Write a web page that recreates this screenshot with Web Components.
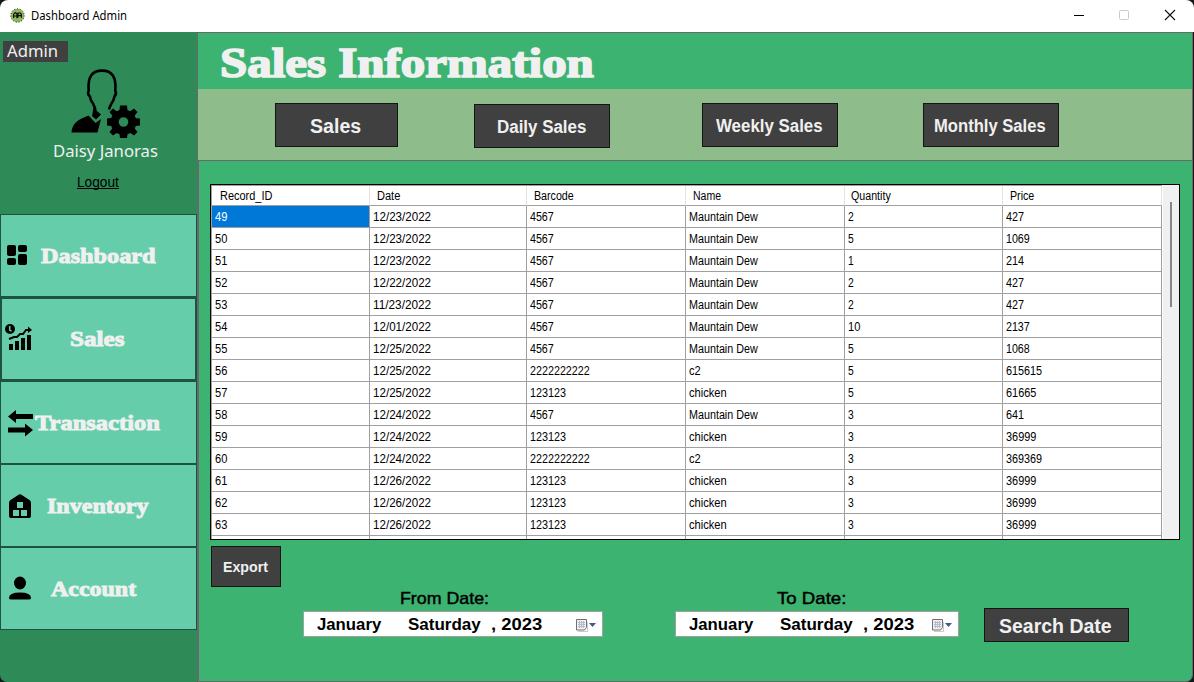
<!DOCTYPE html>
<html lang="en">
<head>
<meta charset="utf-8">
<title>Dashboard Admin</title>
<style>
html,body{margin:0;height:100%;overflow:hidden;background:#15171c}
body{font-family:"Liberation Sans",Arial,sans-serif;font-size:12px;color:#000}
</style>
</head>
<body>
<sales-window></sales-window>
<script>
class Base extends HTMLElement{
  render(html){
    if(!this.shadowRoot)this.attachShadow({mode:'open'});
    this.shadowRoot.innerHTML=html;
  }
}

/* Text that is stretched horizontally to a given width. */
customElements.define('fit-text',class extends Base{
  connectedCallback(){
    const w=+this.getAttribute('w');
    this.render(`<style>:host{display:inline-block;flex:none;width:${w}px;white-space:pre}
      span{display:inline-block;transform-origin:0 50%}</style><span><slot></slot></span>`);
    const s=this.shadowRoot.querySelector('span');
    requestAnimationFrame(()=>{s.style.transform=`scaleX(${w/s.offsetWidth})`});
    if(s.offsetWidth)s.style.transform=`scaleX(${w/s.offsetWidth})`;
  }
});

customElements.define('title-bar',class extends Base{
  connectedCallback(){
    this.render(`<style>
    :host{display:flex;align-items:center;height:32px;background:#fff;border-radius:8px 8px 0 0;padding-left:10px;box-sizing:border-box;font:12px/16px "Noto Sans","Open Sans",sans-serif}
    .logo{margin:-2px 6px 0 0}
    .ctl{display:flex;margin-left:auto;margin-top:-2px}
    .ctl svg{display:block;margin-right:16px}
    .ctl svg:last-child{margin-right:9px}
    </style>
    <svg class="logo" width="15" height="15" viewBox="0 0 15 15"><circle cx="7.5" cy="7.5" r="6.700" fill="#8fb95d" stroke="#20301a" stroke-width="1" stroke-dasharray="1.100 1.700"/><circle cx="7.500" cy="7.500" r="5.500" fill="#8fb95d"/><path d="M3.600 10V6.200L5.400 4.600l1.500 1.200v4.400M3.800 8h3M8 9.800V5h2.200l1.200 1.300v3.500M8.200 7.600h3" fill="none" stroke="#111" stroke-width="1.200"/></svg>
    <fit-text w="96"><slot></slot></fit-text>
    <div class="ctl">
      <svg width="30" height="30"><path d="M11 15.500h10" stroke="#000"/></svg>
      <svg width="30" height="30"><rect x="10.500" y="10.500" width="9" height="9" rx="1" fill="none" stroke="#ccc"/></svg>
      <svg width="30" height="30"><path d="M10 10l10 10M20 10L10 20" stroke="#111" stroke-width="1.100"/></svg>
    </div>`);
  }
});

customElements.define('user-card',class extends Base{
  connectedCallback(){
    this.render(`<style>
    :host{display:flex;flex-direction:column;height:182px;box-sizing:border-box;padding-top:9px;font-family:"Noto Sans","Open Sans",sans-serif;color:#f0f0f0}
    .role{width:65px;height:21px;margin-left:3px;background:#404040;padding-left:4px;box-sizing:border-box;font-size:17px;line-height:20px}
    svg{display:block;margin:4px 0 0 68px}
    .name{margin-left:53px;font-size:17px;line-height:22px}
    .out{margin:12px 0 0 77px;width:42px;height:16px;font:14px/17px "Liberation Sans",Arial,sans-serif;color:#000;background:linear-gradient(#000,#000) 0 14px/42px 1px no-repeat}
    </style>
    <div class="role"><fit-text w="51">Admin</fit-text></div>
    <svg width="76" height="74" viewBox="0 0 76 74">
      <path d="M27.500 47C27.500 42 26.500 40 25 37.500C22.500 34.500 22.500 33 22 30.500C19.500 28.500 20 26 20.700 24.500C19.500 11 24 4.600 34 4.600C44 4.600 48.500 11 47.300 24.500C48.500 27 48 29 46.500 30.500C46 33 45.500 35 43.500 37.500C42.500 39.500 41.500 41 41 43.500" fill="none" stroke="#000" stroke-width="2.600"/>
      <path d="M25.500 42L33 48.500L28 53.500L24 50Z"/>
      <path d="M3.500 66.500C4 58 9 54 20.500 49.500L27.500 57L33 53L29.500 66.500Z"/>
      <path transform="translate(55.500 56)" fill-rule="evenodd" d="M-3.500-16.500H3.500L4-12L6.800-10.800L10.500-13.500L14-10L11.300-6.500L12.300-3.800L16.500-3.500V3.500L12.300 4L11.300 6.500L14 10L10.500 13.500L7 11L4 12.300L3.500 16H-3.500L-4 12.300L-7 11L-10.500 13.500L-14 10L-11.300 6.500L-12.300 4L-16.500 3.500V-3.500L-12.300-4L-11.300-6.500L-14-10L-10.500-13.500L-7-10.800L-4-12ZM0-4.800A4.800 4.800 0 1 0 0 4.800A4.800 4.800 0 1 0 0-4.800"/>
    </svg>
    <div class="name"><fit-text w="105"><slot></slot></fit-text></div>
    <div class="out"><fit-text w="42">Logout</fit-text></div>`);
  }
});

const ICONS={
  dashboard:`<rect x="1" y="2" width="9" height="11" rx="2"/><rect x="12" y="2" width="9" height="7" rx="2"/><rect x="1" y="15" width="9" height="7" rx="2"/><rect x="12" y="11" width="9" height="11" rx="2"/>`,
  sales:`<path d="M9 26h4v-6H9zM15 26h4v-9H15zM21 26h4v-12H21zM27 26h4v-15H27z"/><path d="M9 15L14 13H17L20 10H23L26 6H30" fill="none" stroke="#000" stroke-width="1.900"/><path d="M28 2.500L32 6L28 9Z"/><circle cx="10" cy="5" r="5"/><path d="M9.700 2V6L11.500 7.200" fill="none" stroke="#66cdaa" stroke-width="1.500"/>`,
  transaction:`<path d="M0 6.500L8 0V4H25V9H8V13ZM25 20L17 13.500V17.500H0V22.500H17V26.500Z"/>`,
  inventory:`<path fill-rule="evenodd" d="M1 22V8.500Q1 7 2.500 6L11 .6Q12 0 13 .6L21.500 6Q23 7 23 8.500V22Q23 24 21 24H3Q1 24 1 22ZM9 8V14H15V8ZM5 16V22H11V16ZM13 16V22H19V16Z"/>`,
  account:`<ellipse cx="12" cy="7" rx="6" ry="6.500"/><path d="M1 22Q1 16.500 12 16.500T23 22Q23 23.500 21 23.500H3Q1 23.500 1 22Z"/>`
};
customElements.define('nav-item',class extends Base{
  connectedCallback(){
    const a=n=>this.getAttribute(n), active=this.hasAttribute('active'),b=active?2:1;
    this.render(`<style>
    :host{display:flex;align-items:center;width:197px;height:${active?84:83}px;box-sizing:border-box;border:${b}px solid #1d5340;background:#66cdaa;color:#f0f0f0;font:bold 20px/26px "Liberation Serif",serif;-webkit-text-stroke:.9px #f0f0f0}
    svg{flex:none;margin-left:${a('ix')-b}px;margin-top:${a('iy')||0}px}
    fit-text{margin-left:${a('tx')}px}
    </style><svg width="${a('iw')}" height="27" viewBox="0 0 ${a('iw')} 27">${ICONS[a('icon')]}</svg><fit-text w="${a('w')}"><slot></slot></fit-text>`);
  }
});

customElements.define('flat-button',class extends Base{
  connectedCallback(){
    const a=n=>this.getAttribute(n);
    this.render(`<style>
    :host{display:flex;flex:none;align-items:center;justify-content:center;box-sizing:border-box;width:${a('bw')}px;height:${a('bh')}px;padding:1px 2px 0 0;border:1px solid #151515;background:#404040;color:#f0f0f0;font:bold ${a('fs')||17}px/20px "Liberation Sans",Arial,sans-serif}
    </style><fit-text w="${a('tw')}"><slot></slot></fit-text>`);
  }
});

customElements.define('date-field',class extends Base{
  connectedCallback(){
    const a=n=>this.getAttribute(n);
    this.render(`<style>
    :host{display:block;width:${a('bw')}px;font:17px/20px "Liberation Sans",Arial,sans-serif}
    .label{padding-left:${a('lx')}px;height:23px;line-height:22px;-webkit-text-stroke:.45px #000}
    .box{display:flex;align-items:center;box-sizing:border-box;height:26px;border:1px solid #a1a09c;border-radius:1px;background:#fff;padding:1px 5px 0 13px;font-weight:bold}
    .d{margin-left:27px}.y{margin-left:10px}
    svg{margin-left:auto}
    </style>
    <div class="label"><fit-text w="${a('lw')}"><slot></slot></fit-text></div>
    <div class="box"><fit-text w="64">January</fit-text><fit-text class="d" w="73">Saturday</fit-text><fit-text class="y" w="51">, 2023</fit-text>
    <svg width="22" height="14"><path d="M3 13.500h9.500V4" stroke="#ccc" fill="none"/><path d="M1.500 1.500h10v8l-2 2.500h-8z" fill="#eef0f4" stroke="#756d70"/><path d="M3 4.500h7M3 6.500h7M3 8.500h7M4.500 3v7M6.500 3v7M8.500 3v7" stroke="#b5bccb"/><path d="M14 5h7l-3.500 4z" fill="#41598c"/></svg></div>`);
  }
});

customElements.define('record-grid',class extends Base{
  connectedCallback(){
    const heads=[['Record_ID',52,8],['Date',23,7],['Barcode',40,7],['Name',28,7],['Quantity',40,6],['Price',24,7]];
    const M='Mauntain Dew',C='chicken',W={[M]:69,[C]:38,c2:12};
    const rows=[
      [49,'12/23/2022','4567',M,2,427],[50,'12/23/2022','4567',M,5,1069],[51,'12/23/2022','4567',M,1,214],
      [52,'12/22/2022','4567',M,2,427],[53,'11/23/2022','4567',M,2,427],[54,'12/01/2022','4567',M,10,2137],
      [55,'12/25/2022','4567',M,5,1068],[56,'12/25/2022','2222222222','c2',5,615615],[57,'12/25/2022','123123',C,5,61665],
      [58,'12/24/2022','4567',M,3,641],[59,'12/24/2022','123123',C,3,36999],[60,'12/24/2022','2222222222','c2',3,369369],
      [61,'12/26/2022','123123',C,3,36999],[62,'12/26/2022','123123',C,3,36999],[63,'12/26/2022','123123',C,3,36999]];
    const fit=v=>{v=String(v);const w=W[v]||(v.includes('/')?58:v.length*6);return `<fit-text w="${w}">${v}</fit-text>`};
    this.render(`<style>
    :host{display:flex;box-sizing:border-box;width:970px;height:356px;border:1px solid #000;background:#fff;overflow:hidden;font:12px/23px "Liberation Sans",Arial,sans-serif}
    .grid{width:951px;flex:none;box-sizing:border-box;border-top:1px solid #a0a0a0;border-left:1px solid #a0a0a0}
    .row{display:grid;grid-template-columns:158px 157px 159px 159px 158px 159px;height:22px}
    .row>div{box-sizing:border-box;padding-left:3px;border-right:1px solid #a0a0a0;border-bottom:1px solid #a0a0a0;overflow:hidden;height:22px}
    .head,.head>div{height:20px!important}
    .head>div{border-right-color:#e3e3e3;line-height:20px}
    .sel{background:#0078d7;color:#fff}
    .bar{flex:none;width:16px;margin-left:1px;background:#f0f0f0;box-sizing:border-box;padding:17px 0 0 7px}
    .bar i{display:block;width:2px;height:105px;background:#868686}
    </style>
    <div class="grid"><div class="row head">${heads.map(h=>`<div style="padding-left:${h[2]}px"><fit-text w="${h[1]}">${h[0]}</fit-text></div>`).join('')}</div>
    ${rows.map((r,i)=>`<div class="row">${r.map((v,j)=>`<div${i+j?'':' class="sel"'}>${fit(v)}</div>`).join('')}</div>`).join('')}
    <div class="row">${'<div></div>'.repeat(6)}</div></div>
    <div class="bar"><i></i></div>`);
  }
});

customElements.define('sales-window',class extends Base{
  connectedCallback(){
    this.render(`<style>
    :host{display:block;width:1194px;height:682px}
    .body{display:flex;height:650px}
    .side{width:197px;background:#2e8b57;border-radius:0 0 0 7px}
    .main{width:996px;box-sizing:border-box;border:1px solid #696969;border-radius:0 0 7px 0;background:#3cb371}
    .title{height:56px;padding-left:22px;box-sizing:border-box;font:bold 42px/60px "Liberation Serif",serif;color:#f0f0f0;-webkit-text-stroke:1.700px #f0f0f0}
    .tabs{height:72px;box-sizing:border-box;background:#8fbc8b;border-bottom:1px solid #696969;display:flex;padding:14px 0 0 77px}
    .content{height:520px;box-sizing:border-box;padding:23px 0 0 11px;border-left:1px solid #696969}
    .export{margin:6px 0 0 1px}
    .filter{display:flex;padding-left:93px}
    </style>
    <title-bar>Dashboard Admin</title-bar>
    <div class="body">
      <div class="side"><user-card>Daisy Janoras</user-card>
        <nav-item icon="dashboard" ix="6" iy="2" iw="22" tx="13" w="114">Dashboard</nav-item>
        <nav-item icon="sales" ix="0" iy="-4" iw="33" tx="37" w="54" active>Sales</nav-item>
        <nav-item icon="transaction" ix="8" iy="2" iw="25" tx="2" w="125">Transaction</nav-item>
        <nav-item icon="inventory" ix="8" iy="3" iw="24" tx="15" w="101">Inventory</nav-item>
        <nav-item icon="account" ix="8" iy="2" iw="24" tx="19" w="85">Account</nav-item>
      </div>
      <div class="main">
        <div class="title"><fit-text w="374">Sales Information</fit-text></div>
        <div class="tabs">
          <flat-button bw="123" bh="44" tw="51" fs="20">Sales</flat-button>
          <flat-button style="margin:1px 0 0 76px" bw="136" bh="44" tw="89" fs="17.5">Daily Sales</flat-button>
          <flat-button style="margin-left:92px" bw="136" bh="44" tw="107" fs="17.5">Weekly Sales</flat-button>
          <flat-button style="margin-left:85px" bw="136" bh="44" tw="112" fs="17.5">Monthly Sales</flat-button>
        </div>
        <div class="content">
          <record-grid></record-grid>
          <flat-button class="export" bw="70" bh="41" tw="45" fs="14.500">Export</flat-button>
          <div class="filter">
            <date-field bw="300" lx="97" lw="89" style="margin-top:1px">From Date:</date-field>
            <date-field bw="284" lx="102" lw="69" style="margin:1px 0 0 72px">To Date:</date-field>
            <flat-button style="margin:21px 0 0 25px" bw="145" bh="34" tw="113" fs="20">Search Date</flat-button>
          </div>
        </div>
      </div>
    </div>`);
  }
});
</script>
</body>
</html>
